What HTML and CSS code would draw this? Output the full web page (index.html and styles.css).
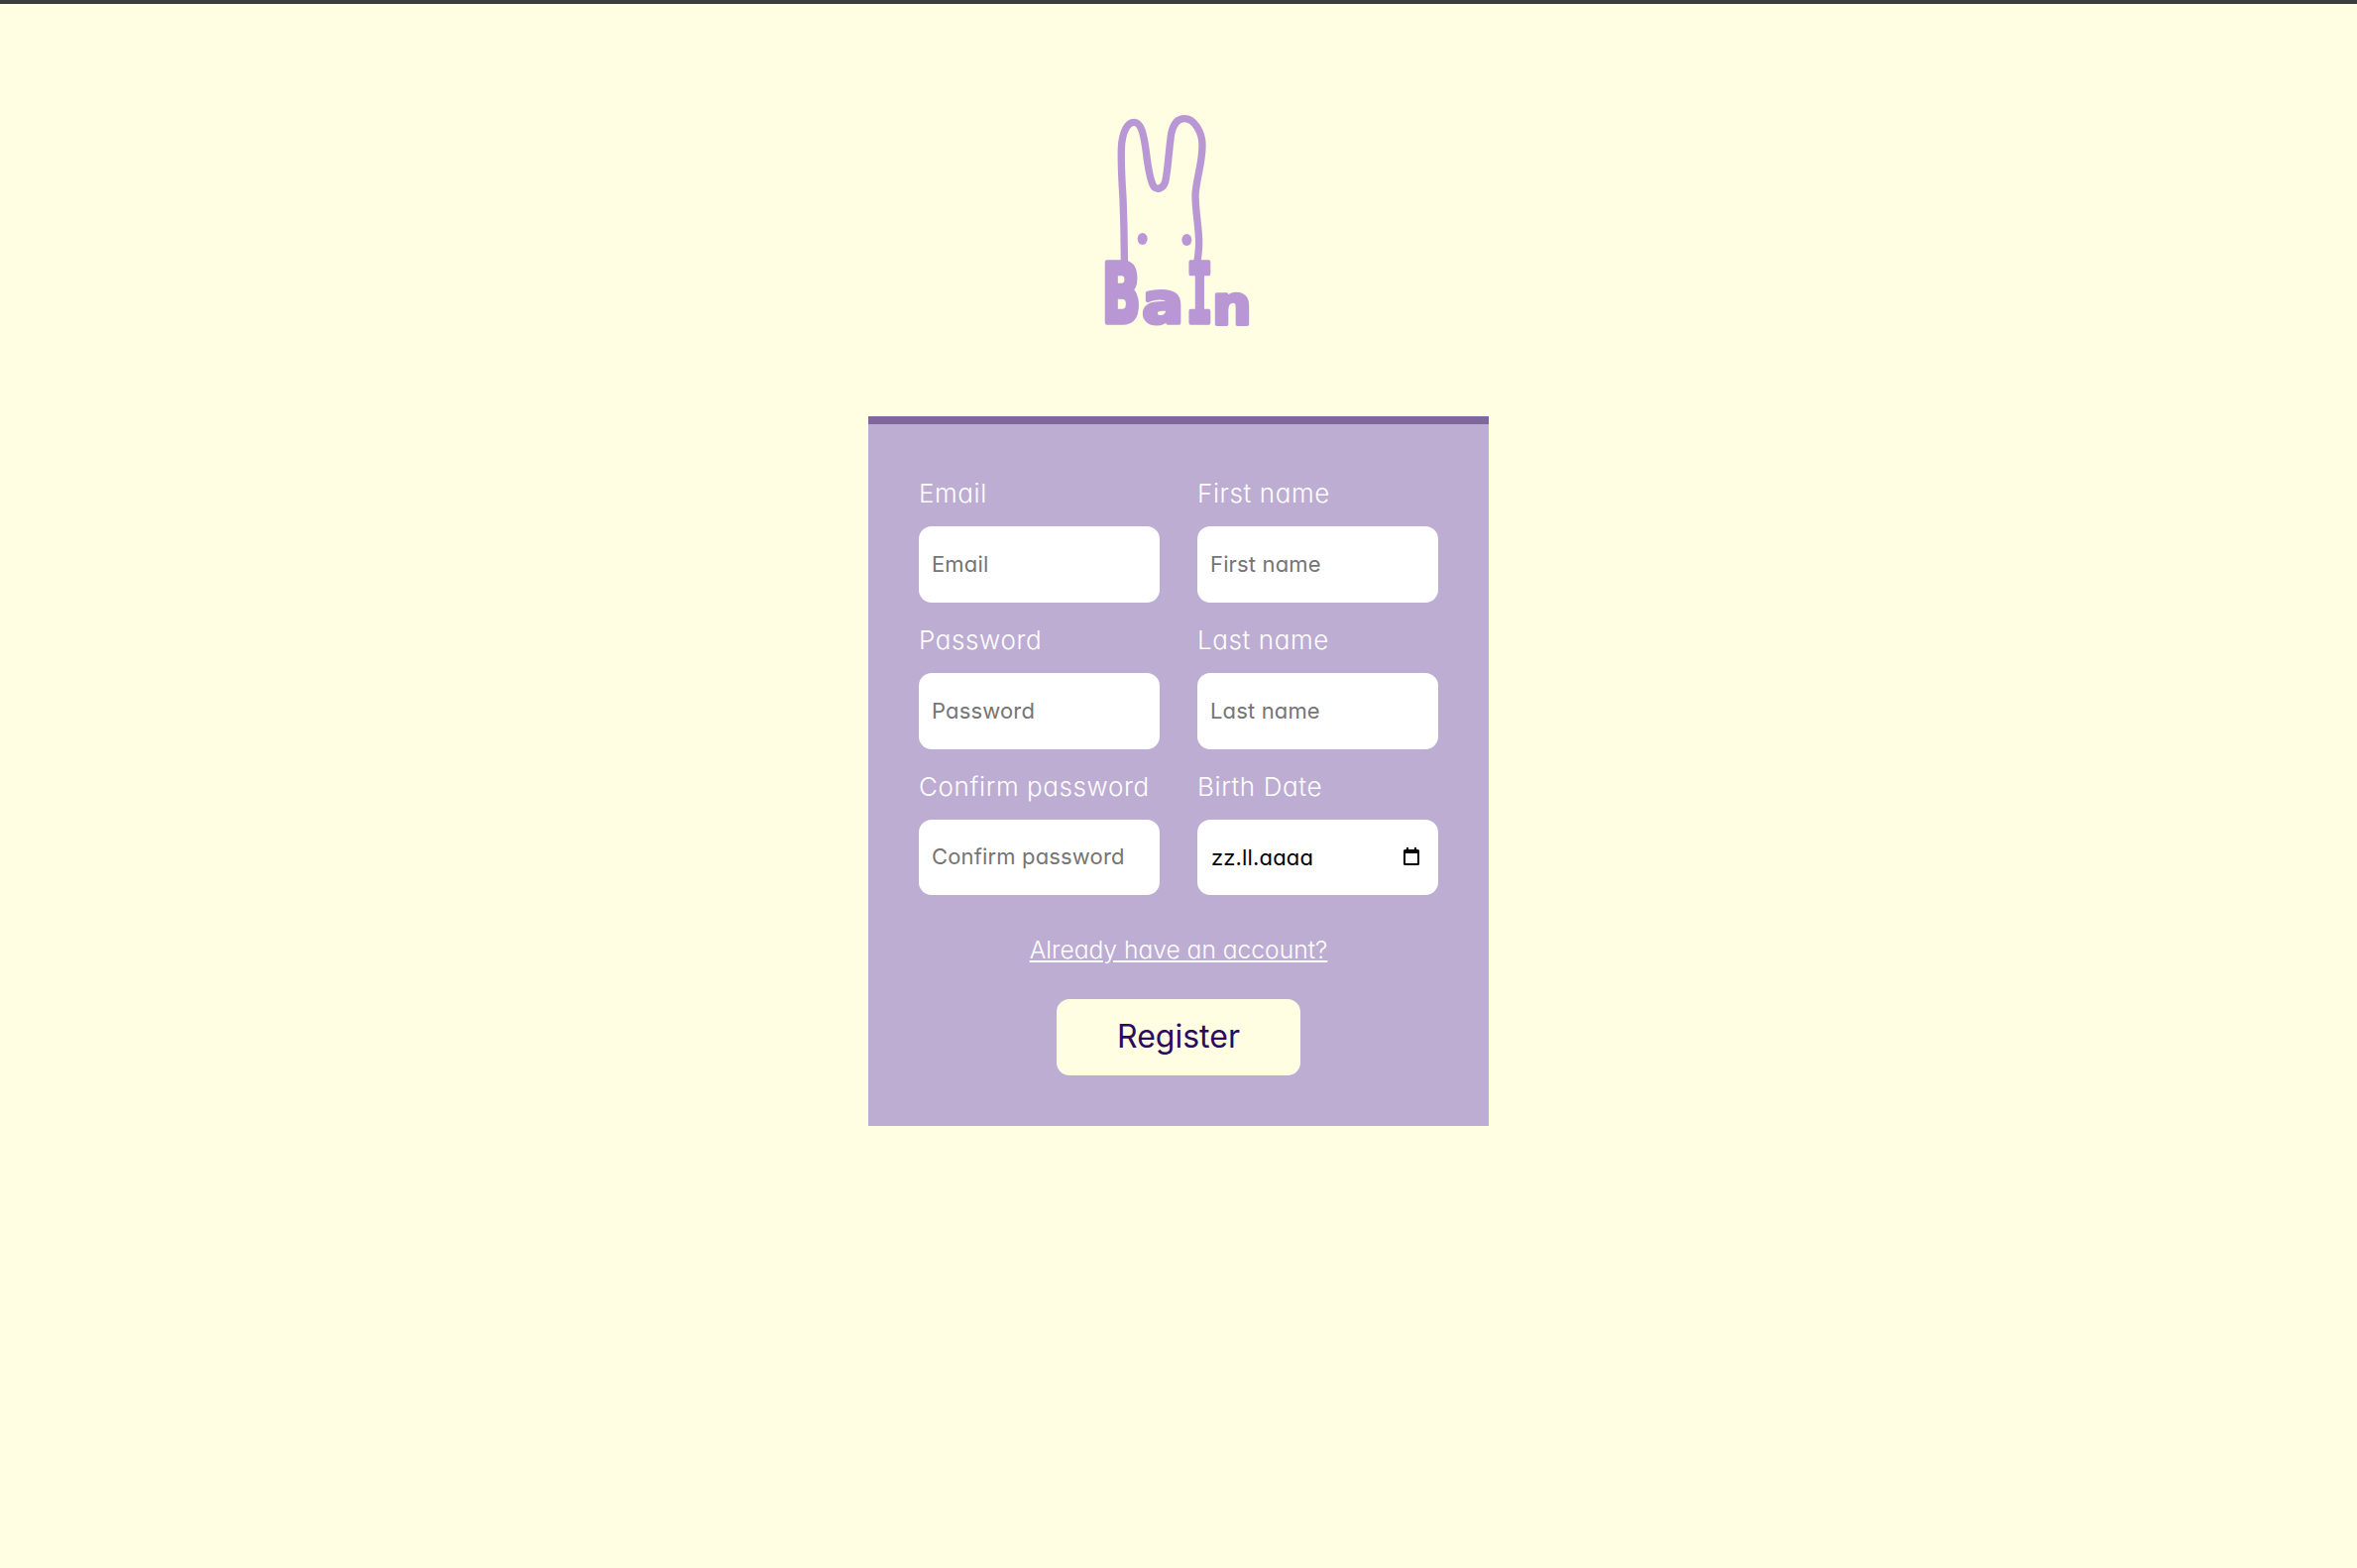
FILE: index.html
```html
<!DOCTYPE html>
<html lang="tr">
<head>
    <meta charset="UTF-8">
    <meta name="viewport" content="width=device-width, initial-scale=1.0">
    <title>Register</title>
    <link rel="stylesheet" href="styles.css">
</head>
<body>
    <div class="logo">
        <svg class="logo-mark" viewBox="0 0 780 780" width="260" height="260" role="img" aria-label="Bain">
            <path class="logo-ears" d="M226 520 C226 440 224 380 222 330 C218 270 216 220 217 180 C219 130 235 100 256 100 C276 100 285 135 292 190 C298 240 306 282 316 296 C326 306 344 300 350 280 C358 245 360 190 368 135 C374 105 388 89 408 89 C435 89 462 125 462 170 C462 225 444 270 441 320 C441 370 452 420 452 465 C452 485 450 500 447 520"/>
            <ellipse class="logo-dot" cx="281" cy="453" rx="15" ry="18"/>
            <ellipse class="logo-dot" cx="415" cy="456" rx="15" ry="18"/>
            <text class="logo-letter" transform="translate(158 704) scale(0.57 0.92)">B</text>
            <text class="logo-letter" transform="translate(280 707) scale(0.69 0.64)">a</text>
            <text class="logo-letter logo-letter-slab" transform="translate(415 704) scale(0.485 0.92)">I</text>
            <text class="logo-letter" transform="translate(492 711) scale(0.62 0.61)">n</text>
        </svg>
    </div>

    <form class="register-card">
        <div class="fields">
            <div class="field">
                <label for="email">Email</label>
                <input id="email" type="text" placeholder="Email">
            </div>
            <div class="field">
                <label for="firstName">First name</label>
                <input id="firstName" type="text" placeholder="First name">
            </div>
            <div class="field">
                <label for="password">Password</label>
                <input id="password" type="text" placeholder="Password">
            </div>
            <div class="field">
                <label for="lastName">Last name</label>
                <input id="lastName" type="text" placeholder="Last name">
            </div>
            <div class="field field-last">
                <label for="confirm">Confirm password</label>
                <input id="confirm" type="text" placeholder="Confirm password">
            </div>
            <div class="field field-last">
                <label>Birth Date</label>
                <div class="date-input">
                    <span>zz.ll.aaaa</span>
                    <svg viewBox="0 0 20 20" width="20" height="20">
                        <path d="M5 0h2v2h6V0h2v2h1.500A1.500 1.500 0 0 1 18 3.500v13a1.500 1.500 0 0 1-1.500 1.500h-13A1.500 1.500 0 0 1 2 16.500v-13A1.500 1.500 0 0 1 3.500 2H5zM4 6v10h12V6z"/>
                    </svg>
                </div>
            </div>
        </div>
        <a class="login-link" href="#">Already have an account?</a>
        <button class="register-btn" type="submit">Register</button>
    </form>
</body>
</html>
```

FILE: styles.css
```css
* {
    box-sizing: border-box;
}
body {
    margin: 0;
    min-height: 1582px;
    background-color: #fffee3;
    border-top: 4px solid #3a3d3c;
    font-family: 'Inter', 'Open Sans', sans-serif;
    font-feature-settings: "cv11" 1;
    display: flex;
    flex-direction: column;
    align-items: center;
}
.logo {
    margin-top: 86px;
    height: 330px;
}
.logo-mark {
    display: block;
}
.logo-ears {
    fill: none;
    stroke: #b897d4;
    stroke-width: 22;
    stroke-linecap: round;
}
.logo-dot {
    fill: #b897d4;
}
.logo-letter {
    font-family: 'DejaVu Sans', sans-serif;
    font-weight: 700;
    font-size: 270px;
    fill: #b897d4;
    stroke: #b897d4;
    stroke-width: 18;
    stroke-linejoin: round;
}
.logo-letter-slab {
    font-family: 'DejaVu Sans Mono', monospace;
}
.register-card {
    width: 626px;
    height: 716px;
    background-color: #bdadd3;
    border-top: 8px solid #7f679c;
    padding: 51px 51px;
    display: flex;
    flex-direction: column;
    align-items: center;
}
.fields {
    display: grid;
    grid-template-columns: 243px 243px;
    column-gap: 38px;
    row-gap: 19px;
}
.field {
    display: flex;
    flex-direction: column;
    gap: 14px;
}
.field label {
    color: #ffffff;
    font-size: 26px;
    font-weight: 350;
    letter-spacing: 0.6px;
    line-height: 38px;
    white-space: nowrap;
}
.field input,
.date-input {
    width: 243px;
    height: 77px;
    border: none;
    border-radius: 13px;
    background-color: #ffffff;
    padding: 0 13px 2px;
    font-family: inherit;
    font-feature-settings: inherit;
    font-size: 22px;
    letter-spacing: 0.15px;
}
.field-last input,
.field-last .date-input {
    height: 76px;
}
.field input::placeholder {
    color: #757575;
    opacity: 1;
}
.date-input {
    display: flex;
    align-items: center;
    justify-content: space-between;
    color: #000000;
    padding: 0 17px 0 14px;
}
.login-link {
    margin-top: 37px;
    color: #ffffff;
    font-size: 24.600px;
    font-weight: 350;
    line-height: 36px;
}
.register-btn {
    margin-top: 32px;
    width: 246px;
    height: 77px;
    border: none;
    border-radius: 13px;
    background-color: #fffee3;
    color: #2e0a5e;
    font-family: inherit;
    font-feature-settings: inherit;
    font-size: 32px;
    font-weight: 400;
    padding-bottom: 3px;
    cursor: pointer;
}
```
